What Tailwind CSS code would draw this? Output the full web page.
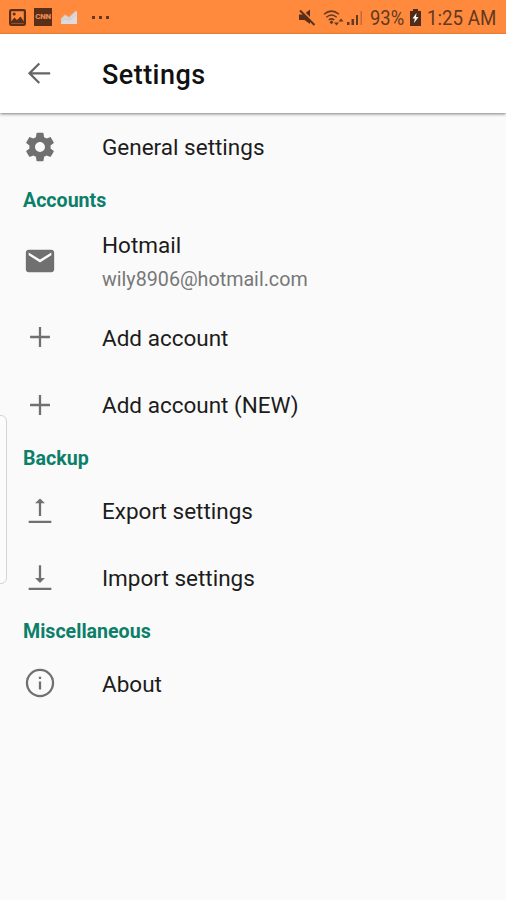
<!DOCTYPE html>
<html lang="en">
<head>
<meta charset="utf-8">
<title>Settings</title>
<script src="https://cdn.jsdelivr.net/npm/@tailwindcss/browser@4"></script>
</head>
<body class="w-[506px] h-[900px] overflow-hidden bg-[#fafafa] font-[Roboto,sans-serif] text-[#1c1c1c] relative">
<header class="h-[34px] bg-[#ff8a3d] flex items-center justify-between pl-[9px] pr-[10px] text-[#63391f]">
  <div class="flex items-center h-full">
    <svg class="w-[17px] h-[17px]" viewBox="0 0 17 17"><rect x="1.100" y="1.100" width="14.800" height="14.800" rx="1.200" fill="none" stroke="#5b2f17" stroke-width="2.200"/><path d="M2 12.500l3.500-4 2.500 2.500 3.500-3.500 3.500 5v2H2z" fill="#5b2f17"/><circle cx="5.200" cy="5" r="1.500" fill="#5b2f17"/></svg>
    <div class="ml-[8px] w-[18px] h-[18px] bg-[#5b2f17] flex items-center justify-center text-[8px] font-black tracking-[-0.3px] text-[#e58a52]">CNN</div>
    <svg class="ml-[8px] w-[18px] h-[16px]" viewBox="0 0 18 16"><path d="M1 15V10l4-4 4 2.500 4-4 4-2.500v13z" fill="#dedbe0"/><path d="M1 10l4-4 4 2.500L16 2" fill="none" stroke="#d9bfae" stroke-width="1.200"/><path d="M1 12.500l4-3 4 1.500 7-5" fill="none" stroke="#c9bfc4" stroke-width=".8"/></svg>
    <div class="ml-[14px] flex gap-[4px]"><i class="w-[3px] h-[3px] bg-[#63391f]"></i><i class="w-[3px] h-[3px] bg-[#63391f]"></i><i class="w-[3px] h-[3px] bg-[#63391f]"></i></div>
  </div>
  <div class="flex items-center h-full">
    <svg class="w-[17px] h-[17px]" viewBox="0 0 17 17"><path d="M0 5.500h4.500L11 .5v14.500L5.500 11H0z" fill="#5b2f17"/><path d="M2.500 1L17 15" stroke="#ff8a3d" stroke-width="1.800"/><path d="M1 1.500L15.500 16" stroke="#5b2f17" stroke-width="2"/></svg>
    <svg class="ml-[7px] w-[22px] h-[17px]" viewBox="0 0 22 17" fill="none" stroke="#63391f" stroke-width="1.500"><path d="M1 5.300Q8.500-1 16 5.300M3.300 8.300Q8.500 3.700 13.700 8.300M5.700 11Q8.500 8.700 11.300 11"/><path d="M8.500 11.300l2 2-2 2-2-2z" fill="#63391f" stroke="none"/><path d="M11 13.500h5l-2.500 3zM15.500 12.500h5l-2.500-3z" fill="#63391f" stroke="none"/></svg>
    <svg class="ml-[2px] w-[16px] h-[17px]" viewBox="0 0 16 17"><path d="M0 13h2.500v3H0zM4.500 10H7v6H4.500zM9 6h2v10H9z" fill="#63391f"/><path d="M13.500 2h1.500v14h-1.500z" fill="#c76934"/></svg>
    <span class="ml-[7px] w-[34px] whitespace-nowrap"><span class="inline-block origin-left scale-x-[.92] text-[20px] leading-[34px] pt-[2px]">93%</span></span>
    <svg class="ml-[6px] w-[11px] h-[17px]" viewBox="0 0 11 17"><path d="M3 0h5v2h3v15H0V2h3z" fill="#4f2d18"/><path d="M6.500 4L2.500 9.500h2.300L4 14l4.500-6H6z" fill="#fff"/></svg>
    <span class="ml-[6px] w-[70px] -mr-px whitespace-nowrap"><span class="inline-block origin-left scale-x-[.935] text-[20px] leading-[34px] pt-[2px]">1:25 AM</span></span>
  </div>
</header>
<div class="relative h-[79px] bg-white flex items-center pl-[23px] shadow-[0_1px_3px_rgba(0,0,0,.5)]">
  <svg class="w-[34px] h-[34px] shrink-0" viewBox="0 0 24 24" fill="none" stroke="#666" stroke-width="1.600"><path d="M19.200 11.500H4.500M11.500 4.600L4.600 11.500l6.900 6.900"/></svg>
  <h1 class="ml-[45px] pt-[3px] text-[27px] tracking-[0.450px] font-medium text-[#111]">Settings</h1>
</div>
<main>
  <div class="h-[68px] flex items-center pl-[23px]">
    <svg class="w-[34px] h-[34px]" viewBox="0 0 24 24" fill="#707070"><path d="M19.430 12.980c.040-.320.070-.640.070-.980s-.030-.660-.070-.980l2.110-1.650c.190-.150.240-.420.120-.640l-2-3.460c-.120-.220-.390-.300-.610-.220l-2.490 1c-.520-.400-1.080-.730-1.690-.980l-.380-2.650C14.460 2.180 14.250 2 14 2h-4c-.250 0-.460.180-.490.420l-.380 2.650c-.610.250-1.170.590-1.690.980l-2.490-1c-.230-.090-.490 0-.610.220l-2 3.460c-.130.220-.070.490.120.640l2.110 1.650c-.040.320-.070.650-.070.980s.030.660.070.980l-2.110 1.650c-.190.150-.240.420-.120.640l2 3.460c.120.220.390.300.610.220l2.490-1c.520.400 1.080.730 1.690.980l.380 2.650c.030.240.240.420.490.420h4c.250 0 .460-.180.490-.420l.380-2.650c.610-.250 1.170-.590 1.690-.980l2.490 1c.230.090.490 0 .610-.220l2-3.460c.120-.220.070-.490-.120-.640l-2.110-1.650zM12 15.500c-1.930 0-3.500-1.570-3.500-3.500s1.570-3.500 3.500-3.500 3.500 1.570 3.500 3.500-1.570 3.500-3.500 3.500z"/></svg>
    <span class="ml-[45px] pt-[2px] text-[22.500px]">General settings</span>
  </div>
  <h2 class="h-[38px] leading-[39px] pl-[23px] text-[19.600px] font-bold text-[#0b7f69]">Accounts</h2>
  <div class="h-[85px] flex items-center pl-[23px]">
    <svg class="w-[34px] h-[34px] mb-[2px]" viewBox="0 0 24 24" fill="#707070"><path d="M20 4H4c-1.100 0-1.990.900-1.990 2L2 18c0 1.100.900 2 2 2h16c1.100 0 2-.900 2-2V6c0-1.100-.900-2-2-2zm0 4l-8 5-8-5V6l8 5 8-5v2z"/></svg>
    <div class="ml-[45px] pt-[2px]"><div class="text-[22.500px] leading-[34px]">Hotmail</div><div class="text-[19.700px] leading-[36px] text-[#777]">wily8906@hotmail.com</div></div>
  </div>
  <div class="h-[67px] flex items-center pl-[23px]">
    <svg class="w-[34px] h-[34px] mb-px" viewBox="0 0 24 24" stroke="#707070" stroke-width="1.600"><path d="M12 5v14M5 12h14"/></svg>
    <span class="ml-[45px] pt-[2px] text-[22.500px]">Add account</span>
  </div>
  <div class="h-[68px] flex items-center pl-[23px]">
    <svg class="w-[34px] h-[34px]" viewBox="0 0 24 24" stroke="#707070" stroke-width="1.600"><path d="M12 5v14M5 12h14"/></svg>
    <span class="ml-[45px] pt-[2px] text-[22.500px]">Add account (NEW)</span>
  </div>
  <h2 class="h-[38px] leading-[40px] pl-[23px] text-[19.600px] font-bold text-[#0b7f69]">Backup</h2>
  <div class="h-[67px] flex items-center pl-[23px]">
    <svg class="w-[34px] h-[34px]" viewBox="0 0 24 24" fill="#707070"><path d="M4 18.900h16v1.600H4zM11.200 15.500V6.600H8.500L12 3.100l3.500 3.500h-2.700v8.900z"/></svg>
    <span class="ml-[45px] pt-[2px] text-[22.500px]">Export settings</span>
  </div>
  <div class="h-[68px] flex items-center pl-[23px]">
    <svg class="w-[34px] h-[34px]" viewBox="0 0 24 24" fill="#707070"><path d="M4 18.800h16v1.600H4zM11.200 3V12H8.500l3.500 3.500 3.500-3.500h-2.700V3z"/></svg>
    <span class="ml-[45px] pt-[2px] text-[22.500px]">Import settings</span>
  </div>
  <h2 class="h-[38px] leading-[40px] pl-[23px] text-[19.600px] font-bold text-[#0b7f69]">Miscellaneous</h2>
  <div class="h-[67px] flex items-center pl-[23px]">
    <svg class="w-[34px] h-[34px] mb-px" viewBox="0 0 24 24" fill="none" stroke="#707070" stroke-width="1.600"><circle cx="12" cy="12" r="9.200"/><path d="M12 11v5.500M12 7.500v1.700"/></svg>
    <span class="ml-[45px] pt-[2px] text-[22.500px]">About</span>
  </div>
</main>
<div class="absolute left-[-8px] top-[415px] w-[15px] h-[169px] rounded-[6px] border border-[#d4d4d4] bg-[#fcfcfc]"></div>
</body>
</html>
